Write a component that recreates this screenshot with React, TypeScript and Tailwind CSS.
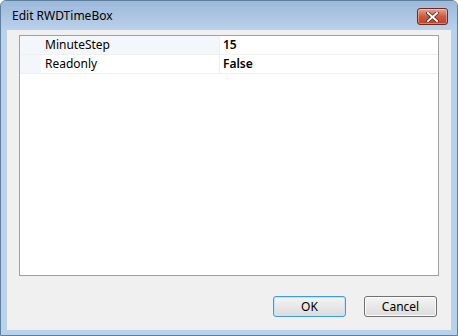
import React from "react";

const font = { fontFamily: '"Noto Sans", "Open Sans", sans-serif' };

function Row({ name, value, selected }: { name: string; value: string; selected?: boolean }) {
  return (
    <div className="flex h-[19px] border-b border-[#f0f0f0]">
      <div className="w-[21px] bg-[#f3f6fa]" />
      <div
        className={`w-[179px] border-r border-[#f0f0f0] pl-[4px] text-[12px] leading-[18px] text-[#000] ${
          selected ? "bg-[#f3f6fa]" : "bg-white"
        }`}
      >
        {name}
      </div>
      <div className="flex-1 bg-white pl-[3px] text-[12px] font-semibold leading-[18px] text-[#000]">{value}</div>
    </div>
  );
}

export default function App() {
  return (
    <div
      className="flex h-[336px] w-[458px] flex-col overflow-hidden rounded-t-[6px] border border-[#5f7f9f] bg-[#b9d1ea]"
      style={font}
    >
      <div className="flex h-[29px] shrink-0 items-start bg-gradient-to-b from-[#9cb8da] to-[#bad1ea] pl-[11px] pr-[9px]">
        <span className="mt-[7px] text-[12px] leading-[16px] text-[#000]">Edit RWDTimeBox</span>
        <div className="ml-auto mt-[7px] flex h-[17px] w-[31px] items-center justify-center rounded-[3px] border border-[#6b2a22] bg-gradient-to-b from-[#e3a394] via-[#cc5a3f] to-[#c2402a] shadow-[inset_0_0_0_1px_rgba(255,255,255,0.35)]">
          <svg width="13" height="10" viewBox="0 0 13 10">
            <path d="M2 1 L11 9 M11 1 L2 9" stroke="#5a2a20" strokeWidth="3.6" strokeLinecap="square" />
            <path d="M2 1 L11 9 M11 1 L2 9" stroke="#ffffff" strokeWidth="2" strokeLinecap="square" />
          </svg>
        </div>
      </div>
      <div className="flex flex-1 px-[6px] pb-[5px]">
        <div className="flex flex-1 flex-col bg-[#f0f0f0] px-[12px] pt-[5px]">
          <div className="h-[241px] border border-[#a0a0a0] bg-white">
            <Row name="MinuteStep" value="15" selected />
            <Row name="Readonly" value="False" />
          </div>
          <div className="mt-[20px] flex justify-end gap-[18px] pr-[2px]">
            <button className="h-[21px] w-[73px] rounded-[3px] border border-[#3c9be5] bg-gradient-to-b from-[#f4f4f4] to-[#dcdcdc] text-[12px] leading-[18px] text-[#000] shadow-[inset_0_0_0_1px_#bfe4fb]">
              OK
            </button>
            <button className="h-[21px] w-[73px] rounded-[3px] border border-[#707070] bg-gradient-to-b from-[#f4f4f4] to-[#dcdcdc] text-[12px] leading-[18px] text-[#000] shadow-[inset_0_0_0_1px_#fcfcfc]">
              Cancel
            </button>
          </div>
        </div>
      </div>
    </div>
  );
}
